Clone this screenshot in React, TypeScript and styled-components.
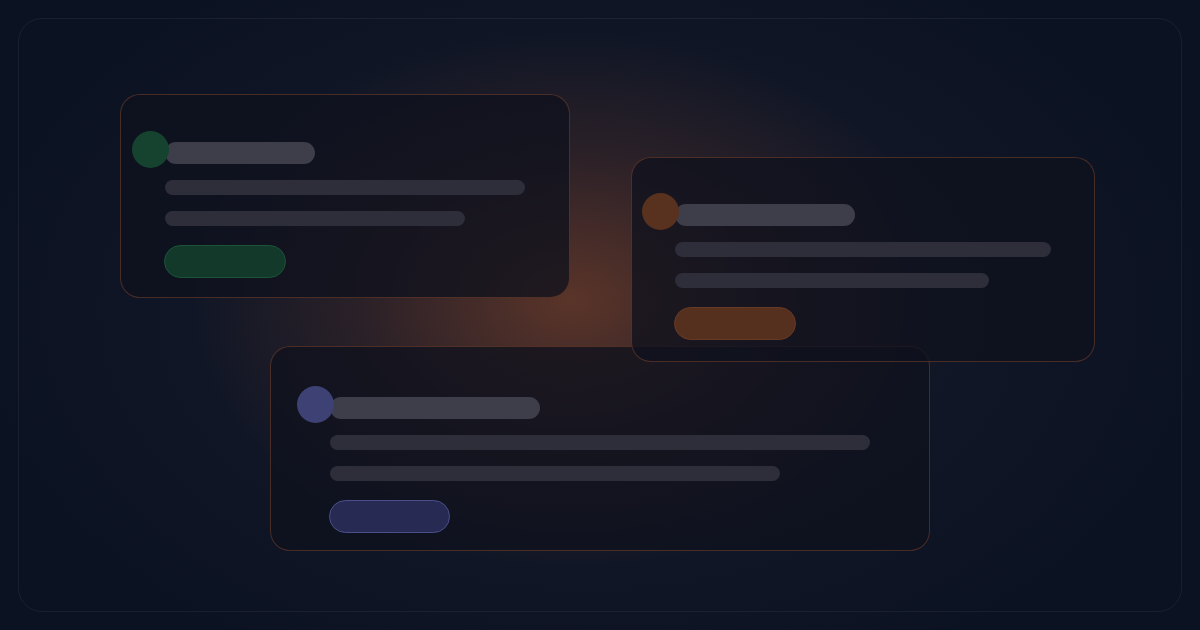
import React from "react";
import styled, { createGlobalStyle } from "styled-components";

const Global = createGlobalStyle`
  html, body { margin: 0; padding: 0; background: #0b1221; }
  body { font-family: "Inter", "Liberation Sans", sans-serif; }
`;

const Page = styled.div`
  width: 1200px;
  height: 630px;
  padding: 18px;
  box-sizing: border-box;
  background:
    radial-gradient(ellipse 380px 270px at 570px 300px, rgba(205, 98, 42, 0.34), rgba(190, 90, 45, 0.12) 55%, rgba(190, 90, 45, 0) 100%),
    radial-gradient(ellipse 620px 400px at 590px 310px, rgba(110, 70, 70, 0.2), rgba(60, 55, 80, 0.1) 65%, rgba(11, 18, 33, 0) 100%),
    #0b1221;
  overflow: hidden;
`;

const Frame = styled.div`
  box-sizing: border-box;
  height: 100%;
  border: 1px solid rgba(255, 255, 255, 0.06);
  border-radius: 24px;
  padding: 75px 0 0 101px;
  display: grid;
  grid-template-columns: 150px 300px 61px 299px 165px;
  grid-template-rows: 63px 141px 48px 16px 189px;
`;

type Accent = "green" | "orange" | "purple";

const accents: Record<Accent, { avatar: string; bg: string; border: string }> = {
  green: { avatar: "#16432f", bg: "#12392a", border: "#1b5439" },
  orange: { avatar: "#58321f", bg: "#56301f", border: "#673a26" },
  purple: { avatar: "#3d4174", bg: "#272a52", border: "#4b4f88" },
};

const Card = styled.div<{ $col: string; $row: string; $pad: number; $top: number; $z: number }>`
  grid-column: ${(p) => p.$col};
  grid-row: ${(p) => p.$row};
  z-index: ${(p) => p.$z};
  box-sizing: border-box;
  border: 1px solid rgba(225, 115, 60, 0.28);
  border-radius: 20px;
  background: rgba(15, 17, 29, 0.76);
  padding: ${(p) => `${p.$top - 1}px ${p.$pad - 1}px 0 ${p.$pad - 1}px`};
  display: flex;
  flex-direction: column;
`;

const Header = styled.div`
  display: flex;
  align-items: flex-start;
  margin-bottom: 12px;
`;

const Avatar = styled.div<{ $accent: Accent }>`
  flex: none;
  width: 37px;
  height: 37px;
  border-radius: 50%;
  margin-left: -33px;
  background: ${(p) => accents[p.$accent].avatar};
  position: relative;
  z-index: 1;
`;

const Title = styled.div<{ $w: number }>`
  flex: none;
  width: ${(p) => p.$w}px;
  height: 22px;
  margin-top: 11px;
  margin-left: -4px;
  border-radius: 11px;
  background: #3e3e4b;
`;

const Line = styled.div<{ $w: string; $gap: number }>`
  width: ${(p) => p.$w};
  height: 15px;
  border-radius: 8px;
  background: #2d2e3a;
  margin-bottom: ${(p) => p.$gap}px;
`;

const Pill = styled.div<{ $accent: Accent; $w: number }>`
  box-sizing: border-box;
  width: ${(p) => p.$w}px;
  height: 33px;
  margin-left: -1px;
  border-radius: 17px;
  background: ${(p) => accents[p.$accent].bg};
  border: 1px solid ${(p) => accents[p.$accent].border};
`;

type Spec = {
  accent: Accent;
  col: string;
  row: string;
  pad: number;
  top: number;
  z: number;
  title: number;
  button: number;
};

const cards: Spec[] = [
  { accent: "green", col: "1 / 3", row: "1 / 3", pad: 45, top: 37, z: 1, title: 150, button: 122 },
  { accent: "purple", col: "2 / 5", row: "4 / 6", pad: 60, top: 40, z: 2, title: 210, button: 121 },
  { accent: "orange", col: "4 / 6", row: "2 / 5", pad: 44, top: 36, z: 3, title: 180, button: 122 },
];

export default function App() {
  return (
    <>
      <Global />
      <Page>
        <Frame>
          {cards.map((c) => (
            <Card key={c.accent} $col={c.col} $row={c.row} $pad={c.pad} $top={c.top} $z={c.z}>
              <Header>
                <Avatar $accent={c.accent} />
                <Title $w={c.title} />
              </Header>
              <Line $w="100%" $gap={16} />
              <Line $w="83.4%" $gap={19} />
              <Pill $accent={c.accent} $w={c.button} />
            </Card>
          ))}
        </Frame>
      </Page>
    </>
  );
}
